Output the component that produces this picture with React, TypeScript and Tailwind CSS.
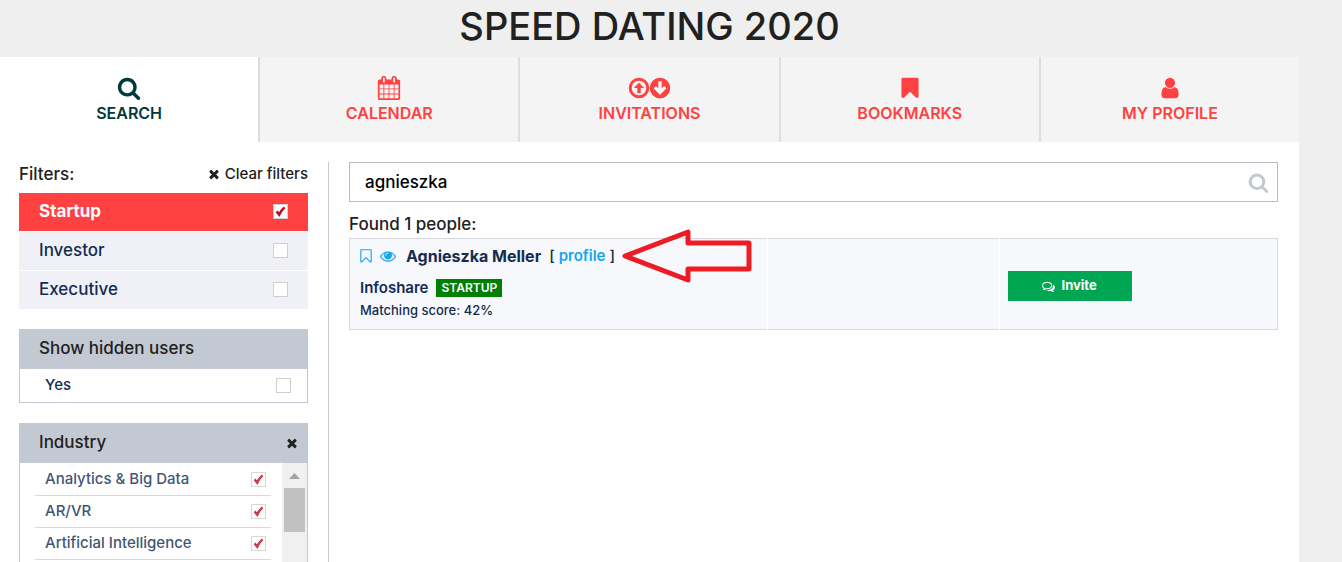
import { useState } from "react";

const paths = {
  search:
    "M1216 832q0-185-131.5-316.5t-316.5-131.5-316.5 131.5-131.5 316.5 131.5 316.5 316.5 131.5 316.5-131.5 131.5-316.5zm512 832q0 52-38 90t-90 38q-54 0-90-38l-343-342q-179 124-399 124-143 0-273.5-55.5t-225-150-150-225-55.5-273.5 55.5-273.5 150-225 225-150 273.5-55.5 273.5 55.5 225 150 150 225 55.5 273.5q0 220-124 399l343 343q37 37 37 90z",
  calendar:
    "M192 1664h288v-288h-288v288zm352 0h320v-288h-320v288zm-352-352h288v-320h-288v320zm352 0h320v-320h-320v320zm-352-384h288v-288h-288v288zm736 736h320v-288h-320v288zm-384-736h320v-288h-320v288zm768 736h288v-288h-288v288zm-384-352h320v-320h-320v320zm-352-864v-288q0-13-9.5-22.5t-22.5-9.5h-64q-13 0-22.5 9.5t-9.5 22.5v288q0 13 9.5 22.5t22.5 9.5h64q13 0 22.5-9.5t9.5-22.5zm736 864h288v-320h-288v320zm-384-384h320v-288h-320v288zm384 0h288v-288h-288v288zm32-480v-288q0-13-9.5-22.5t-22.5-9.5h-64q-13 0-22.5 9.5t-9.5 22.5v288q0 13 9.5 22.5t22.5 9.5h64q13 0 22.5-9.5t9.5-22.5zm384-64v1280q0 52-38 90t-90 38h-1408q-52 0-90-38t-38-90v-1280q0-52 38-90t90-38h128v-96q0-66 47-113t113-47h64q66 0 113 47t47 113v96h384v-96q0-66 47-113t113-47h64q66 0 113 47t47 113v96h128q52 0 90 38t38 90z",
  up: "M896 128a768 768 0 1 0 0 1536a768 768 0 1 0 0-1536zM896 352a544 544 0 1 1 0 1088a544 544 0 1 1 0-1088zM896 500l340 340q20 24 10 42t-36 14h-186v352q0 32-32 32h-192q-32 0-32-32v-352h-186q-26 0-36-14t10-42z",
  down: "M896 128a768 768 0 1 0 0 1536a768 768 0 1 0 0-1536zM800 384h192q32 0 32 32v502l139-139q18-18 45-18t45 18l91 91q18 18 18 45t-18 45l-403 403q-18 18-45 18t-45-18l-403-403q-18-18-18-45t18-45l91-91q18-18 45-18t45 18l139 139v-502q0-32 32-32z",
  bookmark:
    "M1420 128q23 0 44 9 33 13 52.5 41t19.5 62v1289q0 34-19.5 62t-52.5 41q-19 8-44 8-48 0-83-32l-441-424-441 424q-36 33-83 33-23 0-44-9-33-13-52.5-41t-19.5-62v-1289q0-34 19.5-62t52.5-41q21-9 44-9h1048z",
  bookmarkOutline:
    "M1408 256h-1024v1242l423-406 89-85 89 85 423 406v-1242zm12-128q23 0 44 9 33 13 52.5 41t19.5 62v1289q0 34-19.5 62t-52.5 41q-19 8-44 8-48 0-83-32l-441-424-441 424q-36 33-83 33-23 0-44-9-33-13-52.5-41t-19.5-62v-1289q0-34 19.5-62t52.5-41q21-9 44-9h1048z",
  user: "M1536 1399q0 109-62.5 187t-150.5 78h-854q-88 0-150.5-78t-62.5-187q0-85 8.5-160.5t31.5-152 58.5-131 94-89 134.5-34.5q131 128 313 128t313-128q76 0 134.5 34.5t94 89 58.5 131 31.5 152 8.5 160.5zm-256-887q0 159-112.5 271.5t-271.5 112.5-271.5-112.5-112.5-271.5 112.5-271.5 271.5-112.5 271.5 112.5 112.5 271.5z",
  eye: "M1664 960q-152-236-381-353 61 104 61 225 0 185-131.5 316.5t-316.5 131.5-316.5-131.5-131.5-316.5q0-121 61-225-229 117-381 353 133 205 333.5 326.5t434.5 121.5 434.5-121.5 333.5-326.5zm-720-384q0-20-14-34t-34-14q-125 0-214.5 89.5t-89.5 214.5q0 20 14 34t34 14 34-14 14-34q0-86 61-147t147-61q20 0 34-14t14-34zm848 384q0 34-20 69-140 230-376.5 368.5t-499.5 138.5-499.5-139-376.5-368q-20-35-20-69t20-69q140-229 376.5-368t499.5-139 499.5 139 376.5 368q20 35 20 69z",
  times:
    "M1490 1322q0 40-28 68l-136 136q-28 28-68 28t-68-28l-294-294-294 294q-28 28-68 28t-68-28l-136-136q-28-28-28-68t28-68l294-294-294-294q-28-28-28-68t28-68l136-136q28-28 68-28t68 28l294 294 294-294q28-28 68-28t68 28l136 136q28 28 28 68t-28 68l-294 294 294 294q28 28 28 68z",
  comments:
    "M704 384q-153 0-286 52t-211.5 141-78.5 191q0 82 53 158t149 132l97 56-35 84q34-20 62-39l44-31 53 10q78 14 153 14 153 0 286-52t211.5-141 78.5-191-78.5-191-211.5-141-286-52zm0-128q191 0 353.5 68.5t256.5 186.5 94 257-94 257-256.5 186.5-353.5 68.5q-86 0-176-16-124 88-278 128-36 9-86 16h-3q-11 0-20.5-8t-11.5-21q-1-3-1-6.5t.5-6.5 2-6l2.5-5 3.5-5.5 4-5 4.5-5 4-4.5q5-6 23-25t26-29.5 22.5-29 25-38.5 20.5-44q-124-72-195-177t-71-224q0-139 94-257t256.5-186.5 353.5-68.5zm822 1169q10 24 20.5 44t25 38.5 22.5 29 26 29.5 23 25q1 1 4 4.5t4.5 5 4 5 3.5 5.5l2.5 5 2 6 .5 6.5-1 6.5q-3 14-13 22t-22 7q-50-7-86-16-154-40-278-128-90 16-176 16-271 0-472-132 58 4 88 4 161 0 309-45t264-129q125-92 192-212t67-254q0-77-23-152 129 71 204 178t75 230q0 120-71 224.5t-195 176.5z",
};

type IconName = keyof typeof paths;

function Icon({ name, className }: { name: IconName; className: string }) {
  return (
    <svg
      viewBox="0 0 1792 1792"
      fill="currentColor"
      fillRule={name === "up" || name === "down" ? "evenodd" : "nonzero"}
      className={`shrink-0 overflow-visible ${className}`}
      aria-hidden="true"
    >
      <path d={paths[name]} />
    </svg>
  );
}

function Tick({ id, initial = false, faded = false }: { id: string; initial?: boolean; faded?: boolean }) {
  const [checked, setChecked] = useState(initial);
  return (
    <span className={`grid size-[15px] shrink-0 ${faded ? "opacity-80" : ""}`}>
      <input
        id={id}
        type="checkbox"
        checked={checked}
        onChange={() => setChecked(!checked)}
        className="col-start-1 row-start-1 size-[15px] appearance-none border border-[#cfcfcf] bg-white"
      />
      {checked && (
        <svg viewBox="0 0 15 15" className="pointer-events-none col-start-1 row-start-1 size-[15px]" aria-hidden="true">
          <path d="M3.6 7.4 6.2 10.6Q8.4 6 11.6 3.4" fill="none" stroke="#bd0a1e" strokeWidth="2.5" />
        </svg>
      )}
    </span>
  );
}

const tabs: { label: string; icons: IconName[] }[] = [
  { label: "SEARCH", icons: ["search"] },
  { label: "CALENDAR", icons: ["calendar"] },
  { label: "INVITATIONS", icons: ["up", "down"] },
  { label: "BOOKMARKS", icons: ["bookmark"] },
  { label: "MY PROFILE", icons: ["user"] },
];

const roles = ["Startup", "Investor", "Executive"];
const industries = ["Analytics & Big Data", "AR/VR", "Artificial Intelligence"];

function Tabs() {
  return (
    <nav className="flex h-[85px]">
      {tabs.map((tab, i) => (
        <a
          key={tab.label}
          href="#"
          aria-current={i === 0 ? "page" : undefined}
          className={`flex flex-1 flex-col items-center pt-[18px] text-base leading-6 font-semibold ${
            i === 0 ? "bg-white text-[#013a3a]" : "bg-[#f4f4f4] text-[#ff4141]"
          } ${i < tabs.length - 1 ? "border-r-2" : ""} ${i === 0 ? "border-[#dedede]" : "border-[#dedede]"}`}
        >
          <span className="flex h-[26px] items-center">
            {tab.icons.map((icon) => (
              <span key={icon} className={tab.icons.length > 1 ? "flex w-[21px] justify-center" : "flex"}>
                <Icon name={icon} className="size-6" />
              </span>
            ))}
          </span>
          {tab.label}
        </a>
      ))}
    </nav>
  );
}

function Sidebar() {
  return (
    <aside className="flex w-[310px] shrink-0 flex-col border-r border-[#c9c9cb] pr-5 font-medium">
      <div className="flex h-[31px] items-start justify-between text-[#212121]">
        <h2 className="text-[17px] leading-6">Filters:</h2>
        <button type="button" className="flex items-center gap-1 text-[15px] leading-6">
          <Icon name="times" className="size-[14px]" />
          Clear filters
        </button>
      </div>

      <div className="flex flex-col gap-px text-[17px] text-[#142c50]">
        {roles.map((role, i) => (
          <label
            key={role}
            htmlFor={role}
            className={`flex h-[38px] items-center justify-between px-5 pb-px ${
              i === 0 ? "bg-[#ff4141] font-bold text-white" : "bg-[#f0f1f7]"
            }`}
          >
            {role}
            <Tick id={role} initial={i === 0} />
          </label>
        ))}
      </div>

      <section className="mt-5 border border-t-0 border-[#c3c9d2]">
        <h2 className="flex h-10 items-center bg-[#c3c9d2] px-[19px] text-[17px] text-[#212121]">Show hidden users</h2>
        <label htmlFor="hidden-yes" className="flex h-[33px] items-center justify-between pr-4 pl-[25px] text-[15px] text-[#142c50]">
          Yes
          <Tick id="hidden-yes" />
        </label>
      </section>

      <section className="mt-5 flex flex-1 flex-col border-x border-[#c3c9d2]">
        <div className="flex h-10 items-center justify-between bg-[#c3c9d2] pr-2 pl-[19px] text-[#212121]">
          <h2 className="text-[17px]">Industry</h2>
          <button type="button" aria-label="Close industry filter" className="flex">
            <Icon name="times" className="size-[14px]" />
          </button>
        </div>
        <div className="flex flex-1">
          <ul className="flex-1 pt-px pr-[11px] pl-[15px]">
            {industries.map((name) => (
              <li key={name} className="border-b border-[#d9d9d9]">
                <label htmlFor={name} className="flex h-[31px] items-center justify-between pr-[5px] pl-[10px] text-[15px] text-[#435673]">
                  {name}
                  <Tick id={name} initial faded />
                </label>
              </li>
            ))}
          </ul>
          <div className="flex w-[25px] flex-col items-center bg-[#f0f0f0]" aria-hidden="true">
            <svg viewBox="0 0 25 25" className="size-[25px]">
              <path d="M7 16 12.5 10 18 16z" fill="#a3a3a3" />
            </svg>
            <div className="h-11 w-[21px] bg-[#c1c1c1]" />
          </div>
        </div>
      </section>
    </aside>
  );
}

function Results() {
  const [query, setQuery] = useState("agnieszka");
  return (
    <main className="min-w-0 flex-1 pr-[21px] pl-5 font-medium">
      <div className="flex h-10 items-center border border-[#b9bbc2] pr-2">
        <input
          type="text"
          aria-label="Search people"
          value={query}
          onChange={(e) => setQuery(e.target.value)}
          className="h-full min-w-0 flex-1 px-[15px] pb-px text-[17px] text-black outline-none"
        />
        <button type="button" aria-label="Search" className="flex text-[#c3c9d2]">
          <Icon name="search" className="size-[21px]" />
        </button>
      </div>

      <h2 className="mt-[10px] h-[26px] text-[17px] leading-6 text-[#212121]">Found 1 people:</h2>

      <table className="w-full table-fixed border-collapse border border-[#d8d9e0] bg-[#f7f8fc] text-[#142c50]">
        <tbody>
          <tr className="h-[91px]">
            <td className="w-[45%] border-r border-white pl-[10px] align-top">
              <div className="relative mt-[5px] flex h-6 items-center text-base whitespace-nowrap">
                <button type="button" aria-label="Bookmark" className="flex w-3 justify-center text-[#14a4f4]">
                  <Icon name="bookmarkOutline" className="size-4" />
                </button>
                <button type="button" aria-label="Hide" className="ml-2 flex text-[#14a4f4]">
                  <Icon name="eye" className="size-4" />
                </button>
                <strong className="ml-[10px] font-bold">Agnieszka Meller</strong>
                <span className="ml-2 text-[15px]">
                  [{" "}
                  <a href="#" className="font-semibold text-[#14a4f4]">
                    profile
                  </a>{" "}
                  ]
                </span>
                <svg viewBox="0 0 130 54" className="absolute top-[-15px] left-[262px] h-[54px] w-[130px]" aria-hidden="true">
                  <path d="M3 27 66 3V14H127V40H66V51z" fill="none" stroke="#ed1c24" strokeWidth="5" strokeLinejoin="round" />
                </svg>
              </div>
              <div className="mt-2 flex h-6 items-center gap-2 text-[15px]">
                <strong className="font-semibold">Infoshare</strong>
                <span className="bg-[#008000] px-[5px] text-xs leading-[18px] font-semibold text-white">STARTUP</span>
              </div>
              <p className="text-[13px] leading-5">Matching score: 42%</p>
            </td>
            <td className="w-[25%] border-r border-white" />
            <td className="w-[30%] pt-1 pl-2">
              <button type="button" className="flex h-[30px] w-[124px] items-center justify-center gap-[6px] bg-[#00a651] text-[13px] font-bold text-white">
                <Icon name="comments" className="size-[13px]" />
                Invite
              </button>
            </td>
          </tr>
        </tbody>
      </table>
    </main>
  );
}

export default function App() {
  return (
    <div className="flex min-h-screen flex-col bg-[#efefef] pr-[43px] font-['Inter',sans-serif]">
      <h1 className="h-[57px] pt-1 text-center text-[38px] leading-[44px] font-medium text-[#212121]">SPEED DATING 2020</h1>
      <Tabs />
      <div className="flex flex-1 bg-white pt-5 pl-[19px]">
        <Sidebar />
        <Results />
      </div>
    </div>
  );
}
